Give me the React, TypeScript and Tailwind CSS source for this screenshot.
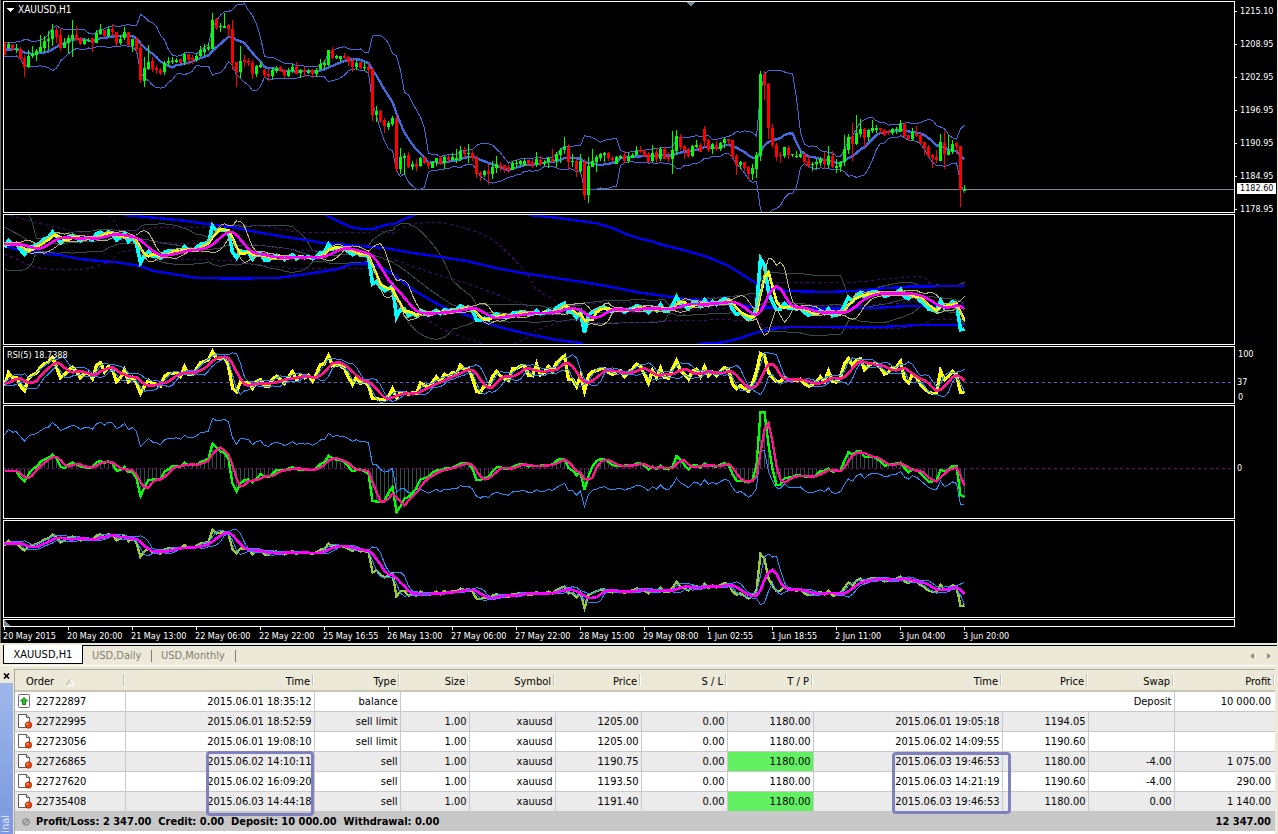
import React from "react";

// Chart units: 3 units = 1 screen pixel, one bar every 12 units.
const STEP = 12;
const FIRST_X = 13.5;

// direction + high, low, body top, body bottom
const RAW_BARS = `
R126,165,126,165 G126,148,132,145 R132,152,135,148 G133,158,146,149 R142,178,147,177 R165,231,174,200 G150,203,168,201 G138,175,162,168
G147,183,153,164 G105,158,141,156 G108,156,123,144 G93,150,117,123 G72,137,90,117 R82,130,90,111 R85,153,105,144 G113,144,129,143
G105,159,114,129 G60,171,105,117 R78,123,105,120 R110,136,114,132 G115,135,120,132 G113,127,120,124 R114,156,115,129 G90,129,98,128
G72,106,90,102 R90,110,91,108 G82,111,88,108 R72,108,87,97 R95,138,96,129 G104,135,117,129 G80,120,96,114 R95,138,97,136
G117,156,117,137 R110,158,118,147 R126,249,145,240 G170,261,204,243 G135,210,186,207 R170,216,183,207 R195,221,204,209 R203,225,209,219
G183,225,189,216 G171,198,183,188 G172,192,182,186 G174,188,180,185 R177,190,177,189 G160,195,162,186 R162,195,162,180 R165,192,174,180
G162,186,167,180 G138,171,150,168 G132,168,146,156 G129,153,141,147 G39,148,60,147 R53,90,57,84 G68,96,78,81 G38,84,78,83
R72,110,76,87 R60,210,87,189 R186,261,186,216 G138,234,183,216 R165,201,180,187 R174,198,183,190 R180,237,189,222 G195,230,198,222
G183,204,196,200 R206,234,210,226 R210,243,222,228 G201,237,210,228 G198,219,204,213 R198,216,201,213 R207,234,210,225 G204,231,213,228
G192,219,201,213 R186,222,201,222 G206,234,210,219 R200,231,210,216 G207,222,212,220 R207,234,209,222 G204,231,210,222 G177,210,192,207
G181,207,190,195 G150,197,150,195 R141,178,150,174 G165,177,168,174 G168,186,168,177 R159,177,168,174 R168,198,171,186 R174,216,183,201
G180,210,189,201 R186,207,186,204 G186,213,201,204 R190,221,201,210 R204,363,207,345 G318,366,333,345 R330,369,333,363 R354,399,360,378
G363,390,369,381 G348,378,354,372 R345,516,357,507 G444,522,471,507 G459,525,468,474 R456,504,465,501 G483,510,492,501 R477,514,492,501
G471,501,474,498 R468,492,474,489 R486,508,486,498 G483,504,486,504 G474,498,474,486 R468,495,474,492 G468,507,471,489 R465,486,471,480
G459,483,471,480 G447,489,474,480 G438,483,453,477 R441,474,453,462 G432,489,459,462 R453,484,459,474 R465,534,474,522 R513,543,519,525
G510,531,513,525 R492,555,513,522 G483,537,501,522 G468,519,492,504 R486,514,495,501 R495,519,495,507 R495,519,501,510 G483,510,489,510
G480,504,489,492 G480,498,483,492 G477,498,483,495 R480,495,480,495 R477,504,486,495 G456,501,477,495 R468,498,480,492 G480,498,486,492
G471,504,474,486 R447,486,476,486 G456,501,462,483 G444,489,450,465 G411,462,441,450 R432,510,441,486 G462,501,483,487 R477,531,483,510
G462,522,483,513 R477,600,486,585 G471,609,498,585 G447,501,483,501 G465,516,471,486 G459,483,462,474 G456,486,459,465 R456,483,459,474
R468,486,474,480 G468,492,471,492 G465,477,468,474 R453,489,465,483 G459,489,471,483 G459,474,465,474 G438,468,453,465 R438,459,450,457
R450,471,453,468 R456,489,462,486 G435,486,459,483 R444,489,456,477 G441,483,447,477 R441,477,447,477 R456,487,471,477 G393,522,450,477
G390,465,408,453 R402,450,411,441 R435,477,438,450 R444,474,447,468 G435,471,438,468 G420,444,435,441 R429,456,435,456 R378,441,387,423
R417,456,420,450 G429,462,432,447 R423,453,435,447 G426,453,429,447 G414,444,417,429 R417,435,417,423 R420,474,420,471 R462,525,468,495
G483,507,486,495 R486,513,486,504 R498,540,501,522 G492,540,504,522 G456,534,465,507 G213,483,222,468 R213,300,222,255 R249,417,252,384
R372,444,384,435 R429,483,435,471 R456,489,465,468 G441,474,441,468 R438,477,444,465 G462,471,462,466 G453,474,468,471 G453,474,462,471
R459,492,462,486 R468,504,483,498 G486,513,492,495 G477,507,486,492 G471,498,477,489 R456,507,477,492 G438,504,468,495 R453,504,468,501
G477,519,498,504 G483,516,486,501 G405,498,447,486 G402,462,411,450 R369,483,408,432 G345,435,399,432 G357,411,387,402 R384,441,387,414
G387,423,390,411 G360,399,384,393 G375,399,384,390 R384,402,384,390 R387,408,390,405 R390,405,393,400 G384,405,387,399 G381,402,387,391
G360,396,372,396 R369,414,372,408 R405,423,405,417 G384,423,396,417 R378,411,402,408 R399,432,405,429 R426,465,426,444 R435,474,441,468
R462,504,465,474 R450,489,471,480 G402,483,426,483 R393,507,429,462 G405,465,453,465 G420,462,432,456 R426,462,429,441 R438,621,438,570
G555,573,567,573`;

const bars = RAW_BARS.trim()
  .split(/\s+/)
  .map((item) => {
    const [high, low, top, bottom] = item.slice(1).split(",").map(Number);
    const up = item[0] === "G";
    return { up, high, low, top, bottom, close: up ? top : bottom };
  });

// closes before the first visible bar, so that the long averages have a start
const history = [
  ...Array(30).fill(-65),
  140, 152, 143, 155, 138, 150, 158, 140, 136, 156, 140, 158,
] as number[];
const closes = [...history, ...bars.map((b) => b.close)];
const weighted = [...history, ...bars.map((b) => b.close * 0.8 + (b.high + b.low) * 0.1)];

function sma(values: number[], period: number) {
  return values.map((_, i) => {
    const part = values.slice(Math.max(0, i - period + 1), i + 1);
    return part.reduce((a, b) => a + b, 0) / part.length;
  });
}

function bands(values: number[], period: number, k: number) {
  const mid = sma(values, period);
  const dev = values.map((_, i) => {
    const part = values.slice(Math.max(0, i - period + 1), i + 1);
    return Math.sqrt(part.reduce((a, b) => a + (b - mid[i]) ** 2, 0) / part.length);
  });
  return {
    mid,
    upper: mid.map((m, i) => m - k * dev[i]),
    lower: mid.map((m, i) => m + k * dev[i]),
  };
}

function rsi(values: number[], period: number) {
  let gain = 1;
  let loss = 1;
  return values.map((v, i) => {
    const move = i === 0 ? 0 : values[i - 1] - v;
    gain = (gain * (period - 1) + Math.max(move, 0)) / period;
    loss = (loss * (period - 1) + Math.max(-move, 0)) / period;
    return (100 * gain) / (gain + loss);
  });
}

// drops the history and returns "x,y x,y ..." for a polyline
function toPoints(values: number[], offset = 0, scale = 1) {
  return values
    .slice(values.length - bars.length)
    .map((v, i) => `${FIRST_X + i * STEP},${(offset + v * scale).toFixed(1)}`)
    .join(" ");
}

const boll = bands(closes, 9, 2);
const fast = sma(closes, 3);
const fastBands = bands(fast, 5, 2);
const midBands = bands(closes, 21, 2);
const slowBands = bands(closes, 42, 2);
const rsiValues = rsi(weighted, 5).map((v) => 1207.5 - v * 1.665);
const rsiBands = bands(sma(rsiValues, 2), 4, 1.4);
const trendBands = bands(sma(closes, 2), 4, 1.4);

const MOMENTUM_POINTS = `
12,212 48,212 60,232 73,246 85,224 97,208 109,200 121,186 133,178 145,174 157,164 169,174 181,200 193,205 205,193 217,188 229,193 241,200
253,202 277,203 289,187 301,183 313,188 325,184 337,190 349,212 361,211 373,200 385,217 397,215 409,232 415,270 421,290 433,262 445,240
469,238 481,240 493,215 505,208 517,197 541,200 553,188 565,195 589,195 601,186 625,178 637,130 649,142 661,155 673,157 685,175 697,250
709,276 721,252 733,240 745,238 757,248 769,236 781,222 793,232 805,232 817,222 829,210 853,212 877,201 889,208 937,210 949,205 961,192
973,188 985,167 997,175 1009,180 1021,180 1033,186 1045,200 1057,214 1069,210 1081,208 1093,214 1105,217 1116,303 1140,306 1153,303
1165,280 1177,258 1189,337 1201,320 1213,295 1225,292 1237,280 1249,265 1261,238 1273,235 1285,230 1297,218 1309,212 1321,212 1333,206
1357,203 1381,190 1405,190 1417,205 1429,240 1441,240 1453,235 1465,232 1477,215 1489,202 1500,200 1520,210 1532,205 1550,195 1568,190
1585,199 1655,195 1670,182 1682,176 1694,178 1706,205 1718,212 1730,226 1741,215 1753,272 1765,230 1777,200 1789,183 1801,178 1813,178
1825,185 1837,195 1850,198 1898,196 1916,188 1928,193 1946,208 1958,200 1970,207 1982,196 1994,208 2012,208 2020,195 2030,167 2042,180
2054,196 2066,209 2078,196 2090,195 2102,204 2114,190 2126,197 2150,200 2170,190 2182,186 2190,205 2206,242 2230,243 2245,248 2258,238
2270,195 2281,36 2294,36 2300,90 2310,170 2320,220 2330,256 2342,254 2354,234 2375,232 2390,225 2430,232 2450,225 2462,213 2474,212
2486,206 2498,215 2522,212 2534,180 2545,156 2558,165 2570,154 2581,152 2592,170 2618,170 2630,175 2642,185 2654,198 2670,194 2702,188
2714,205 2726,217 2738,208 2750,210 2762,220 2774,232 2786,246 2810,242 2822,208 2834,214 2846,208 2858,198 2870,198 2875,230 2881,285
2894,292`;

const momentumKnots = MOMENTUM_POINTS.trim()
  .split(/\s+/)
  .map((p) => p.split(",").map(Number));

const momentum = bars.map((_, i) => {
  const x = FIRST_X + i * STEP;
  const next = momentumKnots.findIndex((k) => k[0] >= x);
  if (next < 1) return momentumKnots[momentumKnots.length - 1][1];
  const [x0, y0] = momentumKnots[next - 1];
  const [x1, y1] = momentumKnots[next];
  return y0 + ((x - x0) / (x1 - x0)) * (y1 - y0);
});

const BLUE_LINES = [
  "12,108 50,118 100,127 180,135 240,147 300,153 350,157 420,168 460,183 520,192 590,204 720,206 840,203 920,192 960,186 1010,178 1055,162 1110,160 1135,170 1175,190 1240,240 1300,275 1345,298 1400,315 1450,335 1500,352 1560,367 1660,388 1750,400",
  "370,15 450,22 560,33 620,42 700,52 780,68 850,80 920,90 960,98 1060,106 1160,115 1220,126 1300,138 1400,153 1480,172 1560,188 1660,203 1760,218 1840,232 1920,248 1980,256 2050,266 2120,272 2200,280 2260,292 2370,293 2420,296 2540,295 2640,293 2720,288 2893,288",
  "972,12 1010,32 1055,52 1090,57 1120,56 1160,44 1185,41 1220,24 1250,12",
  "1585,15 1660,22 1720,30 1790,40 1840,55 1880,73 1920,86 1960,95 1980,103 2050,120 2120,140 2180,165 2230,195 2265,218 2300,232 2360,243 2480,246 2560,243 2640,236 2720,230 2893,228",
  "2090,402 2170,397 2220,385 2270,367 2320,356 2380,350 2660,350 2760,345 2893,345",
];

const PRICES = ["1215.10", "1208.95", "1202.95", "1196.95", "1190.95", "1184.95", "1178.95"];

const DATES = [
  "20 May 2015", "20 May 20:00", "21 May 13:00", "22 May 06:00", "22 May 22:00", "25 May 16:55",
  "26 May 13:00", "27 May 06:00", "27 May 22:00", "28 May 15:00", "29 May 08:00", "1 Jun 02:55",
  "1 Jun 18:55", "2 Jun 11:00", "3 Jun 04:00", "3 Jun 20:00",
];

const COLUMNS = [
  { label: "Time", width: "w-[189px]" },
  { label: "Type", width: "w-[86px]" },
  { label: "Size", width: "w-[69px]" },
  { label: "Symbol", width: "w-[86px]" },
  { label: "Price", width: "w-[86px]" },
  { label: "S / L", width: "w-[86px]" },
  { label: "T / P", width: "w-[86px]" },
  { label: "Time", width: "w-[189px]" },
  { label: "Price", width: "w-[86px]" },
  { label: "Swap", width: "w-[86px]" },
  { label: "Profit", width: "" },
];

const ORDERS = [
  ["22722995", "2015.06.01 18:52:59", "sell limit", "1.00", "xauusd", "1205.00", "0.00", "1180.00", "2015.06.01 19:05:18", "1194.05", "", ""],
  ["22723056", "2015.06.01 19:08:10", "sell limit", "1.00", "xauusd", "1205.00", "0.00", "1180.00", "2015.06.02 14:09:55", "1190.60", "", ""],
  ["22726865", "2015.06.02 14:10:11", "sell", "1.00", "xauusd", "1190.75", "0.00", "1180.00", "2015.06.03 19:46:53", "1180.00", "-4.00", "1 075.00"],
  ["22727620", "2015.06.02 16:09:20", "sell", "1.00", "xauusd", "1193.50", "0.00", "1180.00", "2015.06.03 14:21:19", "1190.60", "-4.00", "290.00"],
  ["22735408", "2015.06.03 14:44:18", "sell", "1.00", "xauusd", "1191.40", "0.00", "1180.00", "2015.06.03 19:46:53", "1180.00", "0.00", "1 140.00"],
];
const TAKE_PROFIT_HIT = ["22726865", "22735408"];

function Line({ points, color, width = 3, dash }: { points: string; color: string; width?: number; dash?: string }) {
  return <polyline points={points} fill="none" stroke={color} strokeWidth={width} strokeDasharray={dash} />;
}

function Panel({
  top,
  inner,
  className,
  overlay,
  axis,
  children,
}: {
  top: number;
  inner: number;
  className: string;
  overlay?: React.ReactNode;
  axis?: React.ReactNode;
  children: React.ReactNode;
}) {
  return (
    <div className={`flex ${className}`}>
      <div className="relative min-w-0 flex-1 overflow-hidden border border-white">
        <svg
          className="block h-full w-full"
          viewBox={`12 ${top} 2892 ${inner}`}
          preserveAspectRatio="xMinYMin meet"
          shapeRendering="crispEdges"
          aria-hidden="true"
        >
          {children}
        </svg>
        {overlay}
      </div>
      <div className="relative w-[42px] shrink-0">{axis}</div>
    </div>
  );
}

function PriceAxis() {
  return (
    <>
      {PRICES.map((price) => (
        <div key={price} className="flex h-[33px] items-start">
          <span className="mt-[10px] h-px w-[2px] bg-white" />
          <span className="ml-[3px] leading-5">{price}</span>
        </div>
      ))}
      <span className="absolute top-[182px] left-[2px] h-[11px] w-[39px] bg-white pl-[3px] leading-[11px] text-black">1182.60</span>
    </>
  );
}

function Charts() {
  return (
    <section className="border-l border-[#6b6b62] bg-black pt-px pb-[1px] pl-[2px] font-['DejaVu_Sans_Condensed','DejaVu_Sans',sans-serif] text-[9px] text-white">
      <div className="flex flex-col gap-px">
        <Panel
          top={6}
          inner={630}
          className="h-[212px]"
          axis={<PriceAxis />}
          overlay={
            <div className="absolute top-[2px] left-[3px] flex items-center gap-1 leading-3">
              <svg width="7" height="4" viewBox="0 0 7 4" shapeRendering="crispEdges">
                <path d="M0 0h7L3.5 4z" fill="#fff" />
              </svg>
              <span className="text-[10px]">XAUUSD,H1</span>
            </div>
          }
        >
          <path d="M12 568.5H12000" stroke="#778899" strokeWidth="3" />
          <Line points={toPoints(boll.upper)} color="#4169e1" />
          <Line points={toPoints(boll.lower)} color="#4169e1" />
          <Line points={toPoints(boll.mid)} color="#4169e1" width={7} />
          {bars.map((b, i) => {
            const x = 12 + i * STEP;
            const color = b.up ? "#00ff00" : "#ff0000";
            return (
              <g key={i} fill={color}>
                <rect x={x} y={b.high} width="3" height={b.low - b.high} />
                <rect x={x - 3} y={b.top} width="9" height={Math.max(3, b.bottom - b.top)} />
              </g>
            );
          })}
          <path d="M2058 6h27l-13 14z" fill="#778899" />
        </Panel>

        <Panel top={645} inner={387} className="h-[131px]">
          <Line points={toPoints(midBands.upper, 641.4, 0.61)} color="#2f4f4f" />
          <Line points={toPoints(midBands.mid, 641.4, 0.61)} color="#2f4f4f" />
          <Line points={toPoints(midBands.lower, 641.4, 0.61)} color="#2f4f4f" />
          <g transform="translate(0 630)">
            {BLUE_LINES.map((points) => (
              <Line key={points} points={points} color="#0000ff" width={7} />
            ))}
          </g>
          <Line points={toPoints(slowBands.upper, 641.4, 0.61)} color="#4b0082" dash="9 9" />
          <Line points={toPoints(slowBands.mid, 641.4, 0.61)} color="#4b0082" dash="9 9" />
          <Line points={toPoints(slowBands.lower, 641.4, 0.61)} color="#4b0082" dash="9 9" />
          <Line points={toPoints(closes, 641.4, 0.61)} color="#00ffff" width={11} />
          <Line points={toPoints(fast, 641.4, 0.61)} color="#ffff00" width={8} />
          <Line points={toPoints(fastBands.upper, 641.4, 0.61)} color="#bdb76b" />
          <Line points={toPoints(fastBands.lower, 641.4, 0.61)} color="#bdb76b" />
          <Line points={toPoints(fastBands.mid, 641.4, 0.61)} color="#ff00ff" width={8} />
        </Panel>

        <Panel
          top={1041}
          inner={168}
          className="h-[58px]"
          overlay={<span className="absolute top-[2px] left-[3px] leading-3">RSI(5) 18.7388</span>}
          axis={
            <div className="flex h-full flex-col pt-[3px] pl-[3px] leading-[10px]">
              <span>100</span>
              <span className="mt-[18px] -ml-px">37</span>
              <span className="mt-[5px]">0</span>
            </div>
          }
        >
          <path d="M12 1147.5H12000" stroke="#6a5acd" strokeWidth="3" strokeDasharray="9 9" />
          <Line points={toPoints(rsiValues)} color="#ffff00" width={10} />
          <Line points={toPoints(rsiBands.upper)} color="#1e90ff" />
          <Line points={toPoints(rsiBands.lower)} color="#1e90ff" />
          <Line points={toPoints(rsiBands.mid)} color="#ff1493" width={8} />
        </Panel>

        <Panel
          top={1218}
          inner={336}
          className="h-[114px]"
          axis={<div className="flex h-full items-center pt-3 pl-[2px]">0</div>}
        >
          {momentum.map((v, i) => (
            <rect key={i} x={12 + i * STEP} y={1200 + Math.min(v, 205)} width="3" height={Math.abs(v - 205)} fill="#2f4f4f" />
          ))}
          <path d="M12 1405.5H12000" stroke="#800080" strokeWidth="3" strokeDasharray="9 9" />
          <Line points={toPoints(weighted, 1219.6, 0.522)} color="#1e90ff" />
          <Line points={toPoints(momentum, 1200)} color="#00ff00" width={7} />
          <Line points={toPoints(sma(momentum, 3), 1200)} color="#ff1493" width={7} />
        </Panel>

        <Panel top={1563} inner={288} className="h-[98px]">
          <Line points={toPoints(closes, 1563, 0.447)} color="#9acd32" width={7} />
          <Line points={toPoints(trendBands.upper, 1563, 0.447)} color="#1e90ff" />
          <Line points={toPoints(trendBands.lower, 1563, 0.447)} color="#1e90ff" />
          <Line points={toPoints(trendBands.mid, 1563, 0.447)} color="#ff00ff" width={8} />
        </Panel>

        <Panel top={1860} inner={18} className="h-2">
          <path d="M12 1860l18 18H12z" fill="#778899" />
        </Panel>
      </div>

      <div className="flex overflow-hidden">
        {DATES.map((date) => (
          <div key={date} className="w-16 shrink-0 whitespace-nowrap">
            <span className="ml-px block h-[3px] w-px bg-white" />
            <span className="block leading-3">{date}</span>
          </div>
        ))}
      </div>
    </section>
  );
}

function Tabs() {
  return (
    <nav className="flex h-[23px] border-b border-white pt-[2px]">
      <span className="w-[3px]" />
      <button className="h-[19px] w-20 border-x border-b border-black bg-white text-center leading-5">XAUUSD,H1</button>
      <div className="flex h-[19px] flex-1 items-center border-t border-black pt-px text-[#808074]">
        <button className="w-[68px] pl-[9px] text-left">USD,Daily</button>
        <span className="h-3 w-px bg-[#808074]" />
        <button className="w-[83px] pl-[9px] text-left">USD,Monthly</button>
        <span className="h-3 w-px bg-[#808074]" />
        <div className="ml-auto flex gap-[13px] pr-[6px]">
          <button aria-label="Previous">
            <svg width="4" height="6" viewBox="0 0 4 6" className="block"><path d="M4 0v6L0 3z" fill="#8f8f86" /></svg>
          </button>
          <button aria-label="Next">
            <svg width="4" height="6" viewBox="0 0 4 6" className="block"><path d="M0 0v6l4-3z" fill="#8f8f86" /></svg>
          </button>
        </div>
      </div>
    </nav>
  );
}

function OrderIcon() {
  return (
    <svg width="14" height="15" viewBox="0 0 14 15" className="block">
      <path d="M.5.5h8l3 3v10H.5z" fill="#fff" stroke="#5c5c5c" />
      <path d="M8.5.5v3h3" fill="#ddd" stroke="#5c5c5c" />
      <circle cx="10.5" cy="11" r="3.3" fill="#e2430f" stroke="#9c2404" strokeWidth=".6" />
      <circle cx="9.5" cy="10" r="1.1" fill="#ff9a70" />
    </svg>
  );
}

function BalanceIcon() {
  return (
    <svg width="14" height="15" viewBox="0 0 14 15" className="block">
      <rect x=".5" y=".5" width="11" height="13" rx="1" fill="#fff" stroke="#6c6c6c" />
      <path d="M6 3.500l3.500 3.500H7.500v3.500h-3V7H2.500z" fill="#2fc52f" stroke="#0b6b0b" strokeWidth=".9" />
    </svg>
  );
}

function OrderCell({ id, icon }: { id: string; icon: React.ReactNode }) {
  return (
    <td className="border-r border-[#c8c8c8]">
      <div className="flex items-center gap-1 pl-[3px]">
        {icon}
        <span className="pt-px">{id}</span>
      </div>
    </td>
  );
}

function Terminal() {
  return (
    <section className="flex min-h-0 flex-1 pt-[3px] pr-[2px]">
      <aside className="flex w-[14px] flex-col pr-px">
        <button aria-label="Close" className="flex h-[14px] items-center justify-center">
          <svg width="7" height="6" viewBox="0 0 7 6"><path d="M1 .5l5 5M6 .5l-5 5" stroke="#000" strokeWidth="1.6" /></svg>
        </button>
        <div className="flex flex-1 items-end bg-gradient-to-b from-[#9db7ea] to-[#7b98e0]">
          <span className="mb-px w-3 rotate-180 leading-3 text-[#dfe8fb] [writing-mode:vertical-rl]">inal</span>
        </div>
      </aside>

      <div className="relative min-w-0 flex-1 border-t border-l border-[#aca899] bg-white">
        <table className="w-full table-fixed border-collapse text-right">
          <colgroup>
            <col className="w-[110px]" />
            {COLUMNS.map((c, i) => (
              <col key={i} className={c.width} />
            ))}
          </colgroup>
          <thead>
            <tr className="h-[21px] border-b-2 border-[#c9c5b4] bg-[#ece9d8]">
              <th className="relative pt-[3px] pb-0 pl-[11px] text-left font-normal after:absolute after:top-1 after:right-0 after:h-3 after:w-[2px] after:border-r after:border-l after:border-r-white after:border-l-[#c7c5b2]">
                <span className="flex items-center gap-3">
                  Order
                  <svg width="9" height="8" viewBox="0 0 9 8"><path d="M.5 7.500L4.500.5" stroke="#aca899" /><path d="M4.500.5l4 7h-8" fill="none" stroke="#fff" /></svg>
                </span>
              </th>
              {COLUMNS.map((c, i) => (
                <th key={i} className="relative pt-[3px] pr-1 pb-0 font-normal after:absolute after:top-1 after:right-0 after:h-3 after:w-[2px] after:border-r after:border-l after:border-r-white after:border-l-[#c7c5b2]">
                  {c.label}
                </th>
              ))}
            </tr>
          </thead>
          <tbody>
            <tr className="h-5 border-b border-[#c8c8c8]">
              <OrderCell id="22722897" icon={<BalanceIcon />} />
              <td className="border-r border-[#c8c8c8] pt-px pr-[2px]">2015.06.01 18:35:12</td>
              <td className="border-r border-[#c8c8c8] pt-px pr-[2px]">balance</td>
              <td colSpan={8} className="border-r border-[#c8c8c8] pt-px pr-[2px]">Deposit</td>
              <td className="pt-px pr-1">10 000.00</td>
            </tr>
            {ORDERS.map(([id, ...cells]) => (
              <tr key={id} className="h-5 border-b border-[#c8c8c8] odd:bg-white even:bg-[#ebebeb]">
                <OrderCell id={id} icon={<OrderIcon />} />
                {cells.map((value, i) => {
                  const hit = i === 6 && TAKE_PROFIT_HIT.includes(id);
                  return (
                    <td
                      key={i}
                      className={`border-r border-[#c8c8c8] pt-px pr-[2px] last:border-r-0 last:pr-1 ${hit ? "bg-[#62f062]" : ""}`}
                    >
                      {value}
                    </td>
                  );
                })}
              </tr>
            ))}
          </tbody>
          <tfoot>
            <tr className="h-5 bg-[#c8c8c8] font-bold">
              <td colSpan={11} className="text-left">
                <div className="flex items-center pt-px pl-[7px] whitespace-pre">
                  <svg width="8" height="8" viewBox="0 0 8 8" className="mr-[6px]">
                    <circle cx="4" cy="4" r="3.300" fill="#bbb" stroke="#7c7c7c" />
                    <path d="M2 6l4-4" stroke="#7c7c7c" />
                  </svg>
                  {"Profit/Loss: 2 347.00  Credit: 0.00  Deposit: 10 000.00  Withdrawal: 0.00"}
                </div>
              </td>
              <td className="pt-px pr-1">12 347.00</td>
            </tr>
          </tfoot>
        </table>
        <div className="pointer-events-none absolute top-[81px] left-[191px] h-[65px] w-[108px] rounded-sm border-3 border-[#8080c0]" />
        <div className="pointer-events-none absolute top-[82px] left-[877px] h-[62px] w-[119px] rounded-sm border-3 border-[#8080c0]" />
      </div>
    </section>
  );
}

export default function App() {
  return (
    <main className="flex min-h-screen flex-col bg-[#ece9d8] pr-px font-['DejaVu_Sans_Condensed','DejaVu_Sans',sans-serif] text-[11px] leading-[14px] text-black">
      <Charts />
      <Tabs />
      <Terminal />
    </main>
  );
}
